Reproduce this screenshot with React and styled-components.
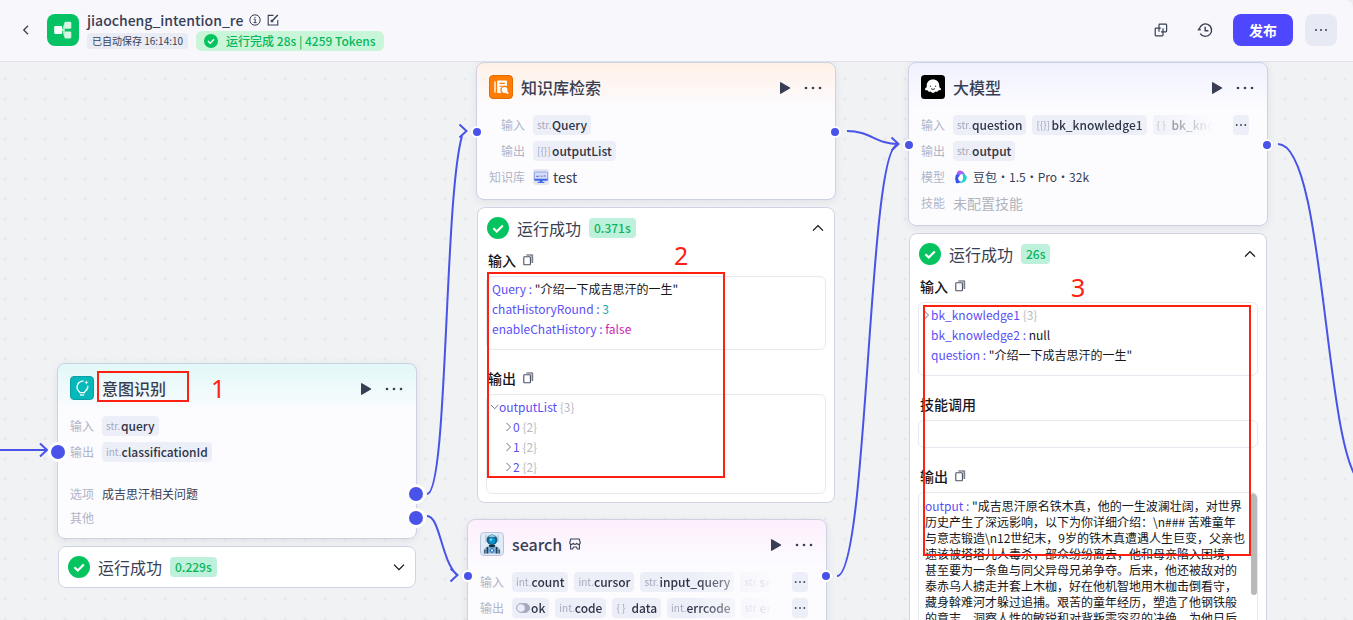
import React from "react";
import styled, { createGlobalStyle, css } from "styled-components";

const sans = `"Noto Sans CJK SC", "Noto Sans", sans-serif`;

const GlobalStyle = createGlobalStyle`
  *, *::before, *::after { box-sizing: border-box; }
  html, body, #root { height: 100%; }
  body {
    margin: 0;
    overflow: hidden;
    background: #eceef3;
    color: #383f54;
    font: 400 12px/20px ${sans};
  }
  button {
    display: inline-flex;
    align-items: center;
    justify-content: center;
    padding: 0;
    border: 0;
    background: none;
    color: inherit;
    font: inherit;
    cursor: pointer;
  }
  svg { display: block; flex: none; }
`;

const Page = styled.div`
  display: flex;
  flex-direction: column;
  height: 100vh;
`;

/* ---------- top bar ---------- */

const TopBar = styled.header`
  display: flex;
  align-items: center;
  flex: none;
  height: 62px;
  padding: 0 16px 1px;
  background: #f7f7fc;
  border-bottom: 1px solid #dfe1ee;
  border-top-right-radius: 8px;
`;

const BackButton = styled.button`
  width: 20px;
  height: 32px;
  margin-right: 11px;
`;

const AppLogo = styled.div`
  display: flex;
  align-items: center;
  justify-content: center;
  width: 32px;
  height: 32px;
  margin-right: 8px;
  border-radius: 8px;
  background: #05c264;
`;

const TitleBlock = styled.div`
  display: flex;
  flex-direction: column;
`;

const TitleRow = styled.div`
  display: flex;
  align-items: center;
  gap: 6px;
  height: 22px;
`;

const AppName = styled.h1`
  margin: 0;
  font-size: 14px;
  line-height: 22px;
  font-weight: 500;
`;

const SmallButton = styled.button`
  width: 12px;
  height: 16px;
`;

const StatusRow = styled.div`
  display: flex;
  align-items: center;
  gap: 8px;
`;

const SavedBadge = styled.span`
  height: 16px;
  padding: 0 5px;
  border-radius: 4px;
  background: #e9ebf5;
  font-size: 10px;
  line-height: 16px;
`;

const RunBadge = styled.span`
  display: flex;
  align-items: center;
  gap: 8px;
  height: 20px;
  padding: 0 8px;
  border-radius: 6px;
  background: #c9f5d9;
  color: #05b95d;
  font-weight: 500;
`;

const TopActions = styled.div`
  display: flex;
  align-items: center;
  gap: 12px;
  margin-left: auto;
`;

const IconButton = styled.button`
  width: 32px;
  height: 32px;
  border-radius: 8px;
  background: ${(p) => (p.$filled ? "#e7eaf4" : "none")};
`;

const PublishButton = styled.button`
  width: 60px;
  height: 32px;
  border-radius: 8px;
  background: #4e47fd;
  color: #fff;
  font-size: 14px;
  font-weight: 700;
`;

/* ---------- canvas ---------- */

const Canvas = styled.main`
  position: relative;
  flex: 1;
  min-height: 0;
  overflow: hidden;
  background-color: #f1f2f4;
  background-image: radial-gradient(circle, #e8e9ee 1px, transparent 2px);
  background-size: 20px 20px;
  background-position: -5px 7px;
`;

const Edges = styled.svg`
  position: absolute;
  inset: 0;
  width: 100%;
  height: 100%;
`;

const NodeGroup = styled.div`
  position: absolute;
  left: ${(p) => p.$x}px;
  top: ${(p) => p.$y}px;
  display: flex;
  flex-direction: column;
  gap: 7px;
  width: 360px;
`;

const NodeCard = styled.section`
  position: relative;
  padding: 12px;
  border: 1px solid #ccd1e3;
  border-radius: 8px;
  background: linear-gradient(${(p) => p.$tint}, #fcfcff 48px);
  box-shadow: 0 2px 8px rgba(30, 40, 80, 0.08);
`;

const NodeHeader = styled.div`
  display: flex;
  align-items: center;
  gap: 8px;
  height: 24px;
  margin-bottom: 16px;
`;

const NodeTitle = styled.h2`
  display: flex;
  align-items: center;
  gap: 7px;
  flex: 1;
  margin: 0;
  font-size: 16px;
  line-height: 24px;
  font-weight: 500;
`;

const NodeButton = styled.button`
  width: 20px;
  height: 24px;
  padding-top: 2px;
`;

const Port = styled.span`
  position: absolute;
  top: ${(p) => p.$top}px;
  ${(p) => p.$side}: ${(p) => (p.$large ? -10 : -6)}px;
  width: ${(p) => (p.$large ? 20 : 12)}px;
  height: ${(p) => (p.$large ? 20 : 12)}px;
  border: ${(p) => (p.$large ? 3 : 2)}px solid #fff;
  border-radius: 50%;
  background: #4953e8;
`;

const Fields = styled.div`
  display: grid;
  grid-template-columns: auto minmax(0, 1fr);
  gap: ${(p) => (p.$tight ? 4 : 6)}px 8px;
  margin: ${(p) => (p.$tight ? "22px 0 -2px" : "0")};
`;

const FieldLabel = styled.span`
  color: #b0b5c7;
  text-align: right;
`;

const FieldValue = styled.div`
  display: flex;
  align-items: center;
  gap: ${(p) => p.$gap || 6}px;
  height: 20px;
  min-width: 0;
  font-size: ${(p) => (p.$big ? 14 : 12)}px;
  color: ${(p) => (p.$muted ? "#b3b4bb" : "inherit")};
`;

const ChipList = styled.div`
  display: flex;
  gap: 6px;
  flex: 1;
  min-width: 0;
  overflow: hidden;
  ${(p) =>
    p.$fade &&
    css`
      mask-image: linear-gradient(to right, #000 70%, transparent 100%);
    `}
`;

const ChipBox = styled.span`
  display: flex;
  align-items: center;
  flex: none;
  height: 20px;
  padding: 0 4px;
  border-radius: 4px;
  background: #edeff8;
  color: #2e3447;
  font-weight: 500;
`;

const ChipType = styled.span`
  min-width: 15px;
  color: #a4a9bd;
  font-size: 10px;
  font-weight: 400;
`;

const MoreChip = styled.button`
  flex: none;
  width: 16px;
  height: 20px;
  margin: 0 6px 0 14px;
  border-radius: 4px;
  background: #edeff8;
`;

/* ---------- run result ---------- */

const ResultCard = styled.section`
  margin: 0 1px;
  border: 1px solid #d0d4e6;
  border-radius: 8px;
  background: #fff;
`;

const ResultHeader = styled.div`
  display: flex;
  align-items: center;
  gap: 8px;
  height: 40px;
  padding: 0 8px 0 9px;
  font-size: 16px;
`;

const TimeTag = styled.span`
  padding: 0 5px;
  border-radius: 4px;
  background: #bdf1db;
  color: #0cb45c;
  font-size: 12px;
  font-weight: 500;
`;

const Toggle = styled.button`
  width: 16px;
  height: 24px;
  margin-left: auto;
  color: #111;
`;

const ResultBody = styled.div`
  display: flex;
  flex-direction: column;
  gap: 16px;
  padding: 0 8px 8px;
`;

const SectionTitle = styled.h3`
  display: flex;
  align-items: center;
  gap: 6px;
  margin: 0 0 4px;
  padding-left: 2px;
  color: #14161c;
  font-size: 14px;
  line-height: 24px;
  font-weight: 500;
`;

const JsonBox = styled.div`
  position: relative;
  height: ${(p) => p.$height}px;
  padding: ${(p) => (p.$long ? "5px 12px 0 6px" : "2px 5px 0")};
  overflow: hidden;
  border: 1px solid #e7e8f0;
  border-radius: 6px;
  color: #14161c;
  line-height: ${(p) => (p.$long ? 16 : 20)}px;
`;

const JsonRow = styled.div`
  display: flex;
  align-items: center;
  padding-left: ${(p) => (p.$depth || 0) * 14}px;
  white-space: pre;
`;

const CaretSlot = styled.span`
  width: 7px;
`;

const Key = styled.span`
  color: #5a50f5;
`;

const Value = styled.span`
  color: ${(p) =>
    ({ number: "#14a9b5", bool: "#cc1fb5", count: "#b9bac2" })[p.$kind] ||
    "#14161c"};
`;

const ScrollThumb = styled.span`
  position: absolute;
  top: 0;
  right: 0;
  width: 6px;
  height: 102px;
  border-radius: 3px;
  background: #b9b9ba;
`;

/* ---------- annotations on the canvas ---------- */

const MarkBox = styled.div`
  position: absolute;
  left: ${(p) => p.$x}px;
  top: ${(p) => p.$y}px;
  width: ${(p) => p.$w}px;
  height: ${(p) => p.$h}px;
  border: 2px solid #fe2112;
  pointer-events: none;
`;

const MarkNumber = styled.span`
  position: absolute;
  left: ${(p) => p.$x}px;
  top: ${(p) => p.$y}px;
  color: #fe2112;
  font: 400 25px/32px "Noto Sans", sans-serif;
`;

/* ---------- icons ---------- */

const Dots = ({ gap = 7, r = 1.3 }) => (
  <svg width="18" height="4" viewBox="-9 -2 18 4" fill="#383f54">
    <circle cx={-gap} r={r} />
    <circle r={r} />
    <circle cx={gap} r={r} />
  </svg>
);

const TinyDots = () => (
  <svg width="12" height="4" viewBox="-6 -2 12 4" fill="#383f54">
    <circle cx="-4.3" r=".9" />
    <circle r=".9" />
    <circle cx="4.3" r=".9" />
  </svg>
);

const Play = () => (
  <svg width="12" height="14" viewBox="0 0 12 14">
    <path d="M1.6 1.7v10.6L10.6 7z" fill="#383f54" stroke="#383f54" strokeWidth="1.2" strokeLinejoin="round" />
  </svg>
);

const Chevron = ({ up }) => (
  <svg width="14" height="14" viewBox="0 0 14 14" fill="none" stroke="currentColor" strokeWidth="1.3">
    <path d={up ? "M2 9.6 7 4.6l5 5" : "M2 4.6l5 5 5-5"} />
  </svg>
);

const Caret = ({ open }) => (
  <svg width="7" height="10" viewBox="0 0 7 10" fill="none" stroke="#6b7080" strokeWidth="1" overflow="visible">
    <path d={open ? "M-1 3 2.7 6.7 6.4 3" : "M.5 1 4.5 5l-4 4"} />
  </svg>
);

const Check = ({ size }) => (
  <svg width={size} height={size} viewBox="0 0 22 22">
    <circle cx="11" cy="11" r="11" fill="#05c45f" />
    <path d="M6.4 11.2 9.8 14.5 15.8 8.4" fill="none" stroke="#fff" strokeWidth="2.2" />
  </svg>
);

const CopyIcon = () => (
  <svg width="11" height="12" viewBox="0 0 11 12" fill="none" stroke="#4a4f60" strokeWidth="1.1">
    <rect x=".8" y="2.8" width="6.6" height="8" rx=".6" />
    <path d="M3.4 1h6v8" />
    <path d="M9.4 1v7.6" strokeWidth="1.6" stroke="#7a7f90" />
  </svg>
);

const BranchIcon = () => (
  <svg width="18" height="18" viewBox="0 0 18 18">
    <path d="M7 9h2.8M10 9V5.2q0-1.2 1.2-1.2H12M10 9v4q0 1.2 1.2 1.2H12" fill="none" stroke="#d6f5e3" strokeWidth="1.4" />
    <rect x="10.3" y=".8" width="7" height="7" rx="1.4" fill="#d6f5e3" />
    <rect x="10.3" y="10.4" width="7" height="7" rx="1.4" fill="#d6f5e3" />
    <rect x=".2" y="5" width="8" height="8" rx="1.2" fill="#fff" />
  </svg>
);

const InfoIcon = () => (
  <svg width="12" height="12" viewBox="0 0 12 12" fill="none" stroke="#383f54" strokeWidth="1">
    <circle cx="6" cy="6" r="5.2" />
    <path d="M4.8 5.2h1.4v3.2M4.6 8.6h3" />
    <circle cx="6" cy="3.3" r=".4" fill="#383f54" strokeWidth=".5" />
  </svg>
);

const EditIcon = () => (
  <svg width="12" height="12" viewBox="0 0 12 12" fill="none" stroke="#383f54" strokeWidth="1.1">
    <path d="M6.5 1.4H1.2v9.6h9.6V6" />
    <path d="M4.6 7.4 10.8 1" strokeWidth="1.5" />
    <path d="M4.3 5.8v2h2" />
  </svg>
);

const DuplicateIcon = () => (
  <svg width="14" height="14" viewBox="0 0 14 14" fill="none" stroke="#383f54" strokeWidth="1.2">
    <path d="M5 8.8V2q0-.8.8-.8h6q.8 0 .8.8v6q0 .8-.8.8H7" />
    <path d="M9 5.200V12q0 .8-.8.8H2q-.8 0-.8-.8V6q0-.8.8-.8h4.800" />
  </svg>
);

const HistoryIcon = () => (
  <svg width="16" height="16" viewBox="0 0 16 16" fill="none" stroke="#383f54" strokeWidth="1.4">
    <path d="M3.200 11.600A6.200 6.200 0 1 0 2.200 7.400" />
    <path d="M8.2 4.800v4h3.2" />
    <path d="M.2 8.600 2.200 5.800l2.200 2.400z" fill="#383f54" stroke="none" />
  </svg>
);

const KnowledgeIcon = () => (
  <svg width="24" height="24" viewBox="0 0 24 24">
    <rect x=".5" y=".5" width="23" height="23" rx="3.5" fill="#ff7d05" stroke="#e26c00" />
    <path d="M6 6.4v11" stroke="#fff" strokeWidth="1.4" />
    <path d="M9 5.400h8q1 0 1 1V11a4.600 4.600 0 0 0-5.600 7H8.200V6.200q0-.8.8-.8z" fill="#fff" />
    <path d="M10.600 8.400h5.200M10.600 11.200h3" stroke="#ff7d05" strokeWidth="1.100" />
    <circle cx="15.600" cy="15" r="2.900" fill="#fff" />
    <path d="m17 16.600 2.200 2" stroke="#fff" strokeWidth="1.800" />
  </svg>
);

const IntentIcon = () => (
  <svg width="24" height="24" viewBox="0 0 24 24" fill="none">
    <rect x=".5" y=".5" width="23" height="23" rx="3.5" fill="#05b8b9" stroke="#0a9fa5" />
    <path d="M13.6 5.1A5.9 5.9 0 0 0 8.7 15q1 .8 1.1 1.6h4.6q.1-.9 1.1-1.6a5.8 5.8 0 0 0 2.3-5.2" stroke="#fff" strokeWidth="1.3" />
    <path d="M10 19h4.2" stroke="#fff" strokeWidth="1.3" />
    <path d="m16.4 4.2.6 1.7 1.7.6-1.7.6-.6 1.7-.6-1.7-1.7-.6 1.7-.6z" fill="#fff" />
  </svg>
);

const ModelIcon = () => (
  <svg width="24" height="24" viewBox="0 0 24 24">
    <rect width="24" height="24" rx="3.5" fill="#000" />
    <path d="M12 4.6c-3.9 0-6.3 2.7-6.3 6.2v1.4c-1.1.6-1.9 1.3-1.6 2.2.3 1 1.6.9 2.2.7.3 1.1 1 1.7 2 1.7.5 0 1-.1 1.4-.3.6.9 1.4 1.4 2.3 1.4s1.7-.5 2.3-1.4c.4.2.9.3 1.4.3 1 0 1.7-.6 2-1.7.6.2 1.9.3 2.2-.7.3-.9-.5-1.6-1.6-2.2v-1.4c0-3.5-2.4-6.2-6.3-6.2z" fill="#fff" />
    <path d="M9.4 10.6v1.3M14.6 10.6v1.3M10 13.6q2 1.8 4 0" fill="none" stroke="#333" strokeWidth="1" />
  </svg>
);

const RobotIcon = () => (
  <svg width="24" height="24" viewBox="0 0 24 24">
    <rect x=".5" y=".5" width="23" height="23" rx="3.5" fill="#dfecf7" stroke="#b9c6da" />
    <path d="M6 3v7M18 3v7" stroke="#9db4c6" strokeWidth="1" />
    <path d="M3.600 21.500q0-6.500 4.900-7.300h7q4.900.8 4.900 7.300z" fill="#8fb0cb" />
    <path d="M7.400 15v6.500M16.600 15v6.500" stroke="#1d3e5c" strokeWidth="1.600" />
    <path d="M4.800 17.500v4M19.200 17.500v4" stroke="#2a5274" strokeWidth="1.200" />
    <circle cx="12" cy="7.800" r="5.400" fill="#1c5a80" />
    <path d="M8 4.600a5.400 5.400 0 0 1 8 0q-4 1.400-8 0z" fill="#8fc3de" />
    <circle cx="12" cy="8.600" r="3.400" fill="#0a93cc" />
    <circle cx="11" cy="7.600" r="1.200" fill="#7be0ff" />
    <path d="M8.6 13h6.8l-1 2.200h-4.800z" fill="#142e44" />
    <path d="m12 15.600 2.800 2.800L12 21.200l-2.800-2.800z" fill="#1577d6" />
    <circle cx="12" cy="18.400" r="1.100" fill="#dff6ff" />
  </svg>
);

const StoreIcon = () => (
  <svg width="12" height="12" viewBox="0 0 12 12" fill="none" stroke="#383f54" strokeWidth="1.1">
    <path d="M1.800 1h8.400l1 3.400a1.500 1.500 0 0 1-3.300.6 2 2 0 0 1-3.800 0 1.500 1.500 0 0 1-3.300-.6z" />
    <path d="M1.600 6.200V11h2l1-2h2.800l1 2h2V6.200" />
  </svg>
);

const DatasetIcon = () => (
  <svg width="16" height="16" viewBox="0 0 16 16">
    <rect width="16" height="16" rx="3" fill="#e4e6ee" />
    <rect x="1.4" y="3" width="13.2" height="8.6" rx="1" fill="#d5ddfb" stroke="#7d95ea" strokeWidth=".8" />
    <path d="M3.4 7.4h2M6.4 7h1M8.4 7.4h1M10.6 7h2" stroke="#5a68b5" strokeWidth="1.2" />
    <path d="M1.4 9.8h13.2v1.8H1.4zM6.6 11.6h2.8v1.6H6.6z" fill="#3c66e4" />
    <path d="M4.6 13.4h6.8" stroke="#3c66e4" />
  </svg>
);

const DoubaoIcon = () => (
  <svg width="16" height="16" viewBox="0 0 16 16">
    <defs>
      <linearGradient id="petal" x1="0" y1="0" x2="0" y2="1">
        <stop offset="0" stopColor="#c65cf5" />
        <stop offset="1" stopColor="#7a6bfa" />
      </linearGradient>
    </defs>
    <rect width="16" height="16" rx="3" fill="#fff" />
    <path d="M3.2 7Q3.4 1.4 7.2 1.4q3.8.2 5.2 5.2L9.8 5Q7 4.4 6 8z" fill="url(#petal)" />
    <path d="M2.6 6.4Q1.4 10 3 14q3.4.8 5.2-1.2Q5 12 5.2 8.4L6.2 6Q4.2 5 2.6 6.4z" fill="#2f55f5" />
    <path d="M9.2 4.8q4 .4 4.6 3.8-.2 4-4.4 5.2l-3.8.2q4.2-1.6 4.4-4.6.2-2.6-.8-4.6z" fill="#18d3cf" />
  </svg>
);

const SwitchIcon = () => (
  <svg width="15" height="12" viewBox="0 0 15 12">
    <rect x=".6" y="1.6" width="13" height="8.8" rx="4.4" fill="#a4a9bd" stroke="#a4a9bd" />
    <circle cx="5" cy="6" r="3.8" fill="#edeff8" />
  </svg>
);

/* ---------- composed parts ---------- */

const Chip = ({ type, name }) => (
  <ChipBox>
    {type === "bool" ? <SwitchIcon /> : <ChipType>{type}</ChipType>}
    {name}
  </ChipBox>
);

const Field = ({ label, chips, more, children, ...rest }) => (
  <>
    <FieldLabel>{label}</FieldLabel>
    <FieldValue {...rest}>
      {chips && (
        <ChipList $fade={more}>
          {chips.map(([type, name]) => (
            <Chip key={name} type={type} name={name} />
          ))}
        </ChipList>
      )}
      {more && (
        <MoreChip aria-label="更多">
          <TinyDots />
        </MoreChip>
      )}
      {children}
    </FieldValue>
  </>
);

const Node = ({ icon, title, badge, tint, children }) => (
  <NodeCard $tint={tint}>
    <NodeHeader>
      {icon}
      <NodeTitle>
        {title}
        {badge}
      </NodeTitle>
      <NodeButton aria-label="运行">
        <Play />
      </NodeButton>
      <NodeButton aria-label="更多">
        <Dots />
      </NodeButton>
    </NodeHeader>
    {children}
  </NodeCard>
);

const Result = ({ time, open, children }) => (
  <ResultCard>
    <ResultHeader>
      <Check size={22} />
      运行成功
      <TimeTag>{time}</TimeTag>
      <Toggle aria-label="展开" aria-expanded={!!open}>
        <Chevron up={open} />
      </Toggle>
    </ResultHeader>
    {open && <ResultBody>{children}</ResultBody>}
  </ResultCard>
);

const Section = ({ title, copy = true, children, ...box }) => (
  <div>
    <SectionTitle>
      {title}
      {copy && (
        <SmallButton aria-label="复制">
          <CopyIcon />
        </SmallButton>
      )}
    </SectionTitle>
    <JsonBox {...box}>{children}</JsonBox>
  </div>
);

const Leaf = ({ name, value, kind, slot }) => (
  <JsonRow>
    {slot && <CaretSlot />}
    <Key>{name} : </Key>
    <Value $kind={kind}>{value}</Value>
  </JsonRow>
);

const Branch = ({ name, count, open, depth }) => (
  <JsonRow $depth={depth}>
    <Caret open={open} />
    <Key>{name}</Key>
    <Value $kind="count"> {`{${count}}`}</Value>
  </JsonRow>
);

const edgePaths = [
  "M0 388H46M40 381.5l7 6.5-7 6.5",
  "M427 432C448 432 444 138 462 74M459.5 62.5l7 6.5-7 6.5",
  "M427 454C440 454 441 498 457 513M450.5 506.5l7 6.5-7 6.5",
  "M847 69C870 69 876 82 898 82M891.5 75.5l7 6.5-7 6.5",
  "M837 514C868 514 868 88 897 83",
  "M1278 82C1326 82 1324 398 1362 422",
];

const story =
  "\"成吉思汗原名铁木真，他的一生波澜壮阔，对世界历史产生了深远影响，以下为你详细介绍：\\n### 苦难童年与意志锻造\\n12世纪末，9岁的铁木真遭遇人生巨变，父亲也速该被塔塔儿人毒杀，部众纷纷离去，他和母亲陷入困境，甚至要为一条鱼与同父异母兄弟争夺。后来，他还被敌对的泰赤乌人掳走并套上木枷，好在他机智地用木枷击倒看守，藏身斡难河才躲过追捕。艰苦的童年经历，塑造了他钢铁般的意志、洞察人性的敏锐和对背叛零容忍的决绝，为他日后";

export default function App() {
  return (
    <Page>
      <GlobalStyle />
      <TopBar>
        <BackButton aria-label="返回">
          <svg width="8" height="12" viewBox="0 0 8 12" fill="none" stroke="#383f54" strokeWidth="1.3">
            <path d="M6 1.8 1.8 6 6 10.2" />
          </svg>
        </BackButton>
        <AppLogo>
          <BranchIcon />
        </AppLogo>
        <TitleBlock>
          <TitleRow>
            <AppName>jiaocheng_intention_re</AppName>
            <SmallButton aria-label="详情">
              <InfoIcon />
            </SmallButton>
            <SmallButton aria-label="编辑">
              <EditIcon />
            </SmallButton>
          </TitleRow>
          <StatusRow>
            <SavedBadge>已自动保存 16:14:10</SavedBadge>
            <RunBadge>
              <Check size={14} />
              运行完成 28s | 4259 Tokens
            </RunBadge>
          </StatusRow>
        </TitleBlock>
        <TopActions>
          <IconButton aria-label="创建副本">
            <DuplicateIcon />
          </IconButton>
          <IconButton aria-label="历史">
            <HistoryIcon />
          </IconButton>
          <PublishButton>发布</PublishButton>
          <IconButton $filled aria-label="更多">
            <Dots gap={5} r={1} />
          </IconButton>
        </TopActions>
      </TopBar>

      <Canvas>
        <Edges fill="none" stroke="#4953e8" strokeWidth="2">
          {edgePaths.map((d) => (
            <path key={d} d={d} />
          ))}
        </Edges>

        <NodeGroup $x={57} $y={301}>
          <Node icon={<IntentIcon />} title="意图识别" tint="#e2f8f8">
            <Fields>
              <Field label="输入" chips={[["str.", "query"]]} />
              <Field label="输出" chips={[["int.", "classificationId"]]} />
            </Fields>
            <Fields $tight>
              <Field label="选项">成吉思汗相关问题</Field>
              <Field label="其他" />
            </Fields>
            <Port $large $side="left" $top={78} />
            <Port $large $side="right" $top={120} />
            <Port $large $side="right" $top={144} />
          </Node>
          <Result time="0.229s" />
        </NodeGroup>

        <NodeGroup $x={476} $y={0}>
          <Node icon={<KnowledgeIcon />} title="知识库检索" tint="#fff1e8">
            <Fields>
              <Field label="输入" chips={[["str.", "Query"]]} />
              <Field label="输出" chips={[["[{}]", "outputList"]]} />
              <Field label="知识库" $big $gap={4}>
                <DatasetIcon />
                test
              </Field>
            </Fields>
            <Port $side="left" $top={63} />
            <Port $side="right" $top={63} />
          </Node>
          <Result time="0.371s" open>
            <Section title="输入" $height={74}>
              <Leaf name="Query" value={'"介绍一下成吉思汗的一生"'} />
              <Leaf name="chatHistoryRound" value="3" kind="number" />
              <Leaf name="enableChatHistory" value="false" kind="bool" />
            </Section>
            <Section title="输出" $height={100}>
              <Branch name="outputList" count={3} open />
              <Branch name="0" count={2} depth={1} />
              <Branch name="1" count={2} depth={1} />
              <Branch name="2" count={2} depth={1} />
            </Section>
          </Result>
        </NodeGroup>

        <NodeGroup $x={467} $y={457}>
          <Node icon={<RobotIcon />} title="search" badge={<StoreIcon />} tint="#fdeffd">
            <Fields>
              <Field
                label="输入"
                more
                chips={[["int.", "count"], ["int.", "cursor"], ["str.", "input_query"], ["str.", "search_id"]]}
              />
              <Field
                label="输出"
                more
                chips={[["bool", "ok"], ["int.", "code"], ["{ }", "data"], ["int.", "errcode"], ["str.", "errmsg"]]}
              />
            </Fields>
            <Port $side="left" $top={50} />
            <Port $side="right" $top={50} />
          </Node>
        </NodeGroup>

        <NodeGroup $x={908} $y={0}>
          <Node icon={<ModelIcon />} title="大模型" tint="#f1f1fe">
            <Fields>
              <Field
                label="输入"
                more
                chips={[["str.", "question"], ["[{}]", "bk_knowledge1"], ["{ }", "bk_knowledge2"]]}
              />
              <Field label="输出" chips={[["str.", "output"]]} />
              <Field label="模型" $gap={4}>
                <DoubaoIcon />
                豆包・1.5・Pro・32k
              </Field>
              <Field label="技能" $big $muted>
                未配置技能
              </Field>
            </Fields>
            <Port $side="left" $top={76} />
            <Port $side="right" $top={76} />
          </Node>
          <Result time="26s" open>
            <Section title="输入" $height={74}>
              <Branch name="bk_knowledge1" count={3} />
              <Leaf slot name="bk_knowledge2" value="null" />
              <Leaf slot name="question" value={'"介绍一下成吉思汗的一生"'} />
            </Section>
            <Section title="技能调用" copy={false} $height={28} />
            <Section title="输出" $height={200} $long>
              <Key>output : </Key>
              {story}
              <ScrollThumb />
            </Section>
          </Result>
        </NodeGroup>

        <MarkBox $x={97} $y={309} $w={92} $h={31} />
        <MarkNumber $x={211} $y={310}>1</MarkNumber>
        <MarkBox $x={487} $y={210} $w={238} $h={206} />
        <MarkNumber $x={674} $y={177}>2</MarkNumber>
        <MarkBox $x={923} $y={243} $w={328} $h={251} />
        <MarkNumber $x={1071} $y={209}>3</MarkNumber>
      </Canvas>
    </Page>
  );
}
